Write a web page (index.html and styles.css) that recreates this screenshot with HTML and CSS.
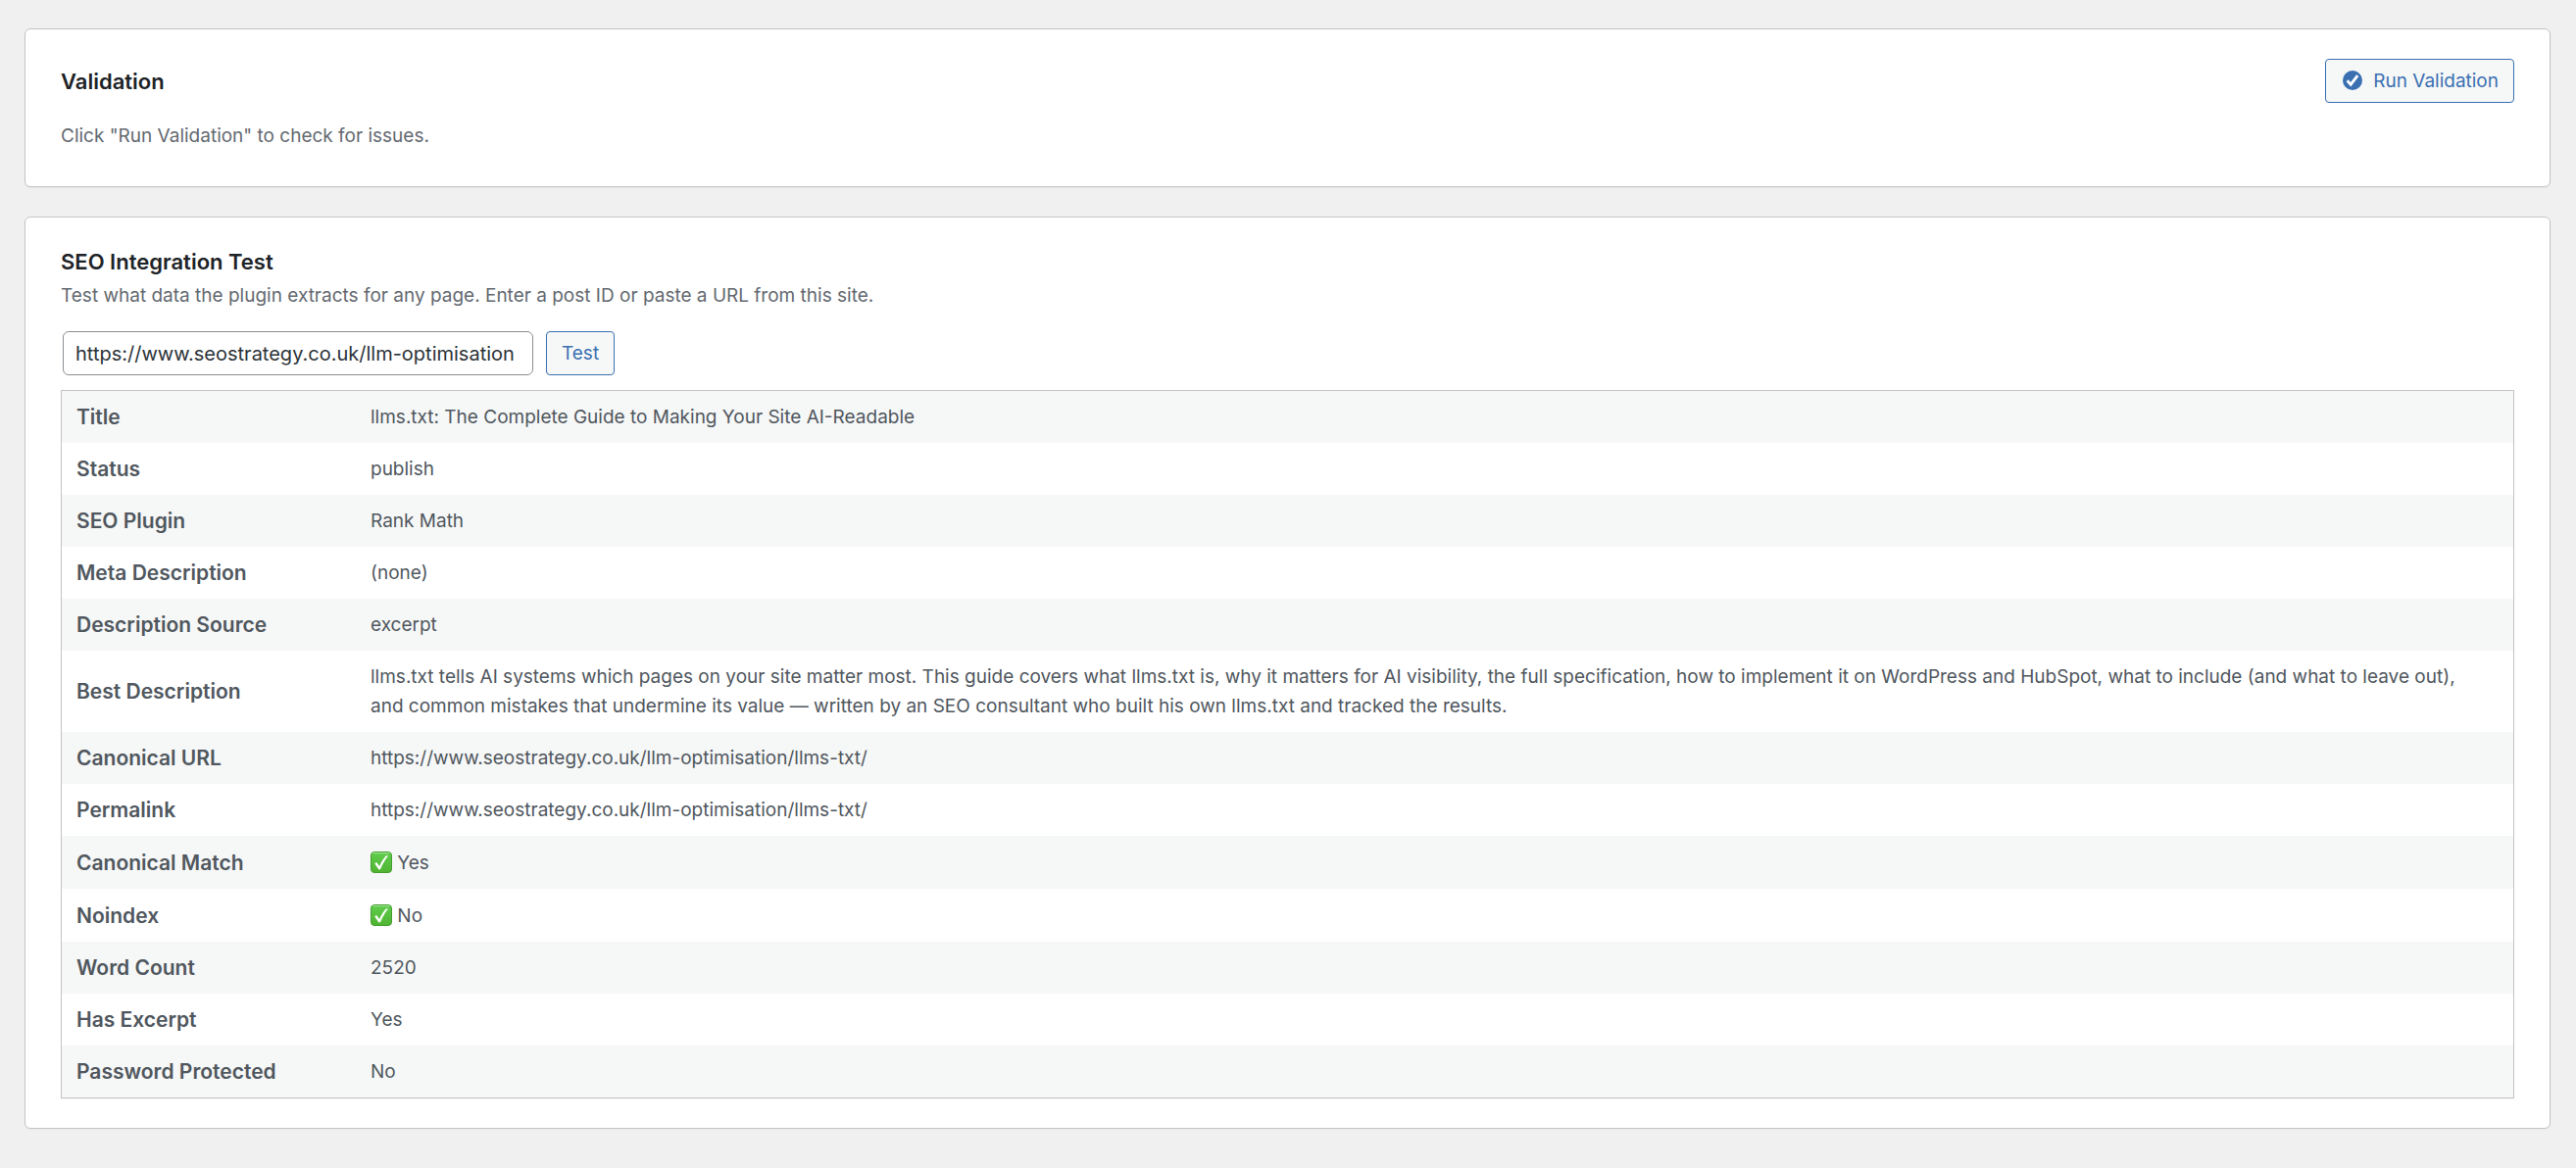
FILE: index.html
```
<!DOCTYPE html>
<html lang="en">
<head>
    <meta charset="UTF-8">
    <title>Validation</title>
    <link rel="stylesheet" href="styles.css">
</head>
<body>
    <svg class="sprite" aria-hidden="true">
        <defs>
            <linearGradient id="green" x1="0" y1="0" x2="0" y2="1">
                <stop offset="0" stop-color="#5fce4c"/>
                <stop offset="1" stop-color="#50b332"/>
            </linearGradient>
        </defs>
        <symbol id="check" viewBox="0 0 22 22">
            <rect x="0.5" y="0.5" width="21" height="21" rx="3.5" fill="url(#green)" stroke="#449c2f"/>
            <path d="M3 1.6h16" stroke="#a5e89a" stroke-width="1" stroke-linecap="round"/>
            <path d="M4.2 12.2l2-1.1 3 3.9C11 10.5 13.2 7 16 4.2l2 .3C14.8 8.5 12.1 13 10 18.2l-1.5.2z" fill="#fff"/>
        </symbol>
    </svg>

    <div class="card">
        <div class="card-header">
            <h2>Validation</h2>
            <button type="button" class="button">
                <svg class="icon" viewBox="0 0 20 20" aria-hidden="true">
                    <circle cx="10" cy="10" r="10" fill="currentColor"/>
                    <path d="M4.6 10.2l3.6 4L15.2 5.2" fill="none" stroke="#fff" stroke-width="2.8"/>
                </svg>
                Run Validation
            </button>
        </div>
        <p class="description">Click "Run Validation" to check for issues.</p>
    </div>

    <div class="card">
        <h2>SEO Integration Test</h2>
        <p class="description">Test what data the plugin extracts for any page. Enter a post ID or paste a URL from this site.</p>

        <form class="test-form">
            <input type="text" id="test-url" aria-label="Post ID or URL" value="https://www.seostrategy.co.uk/llm-optimisation">
            <button type="button" class="button">Test</button>
        </form>

        <table class="results">
            <tbody>
                <tr>
                    <th scope="row">Title</th>
                    <td>llms.txt: The Complete Guide to Making Your Site AI-Readable</td>
                </tr>
                <tr>
                    <th scope="row">Status</th>
                    <td>publish</td>
                </tr>
                <tr>
                    <th scope="row">SEO Plugin</th>
                    <td>Rank Math</td>
                </tr>
                <tr>
                    <th scope="row">Meta Description</th>
                    <td>(none)</td>
                </tr>
                <tr>
                    <th scope="row">Description Source</th>
                    <td>excerpt</td>
                </tr>
                <tr>
                    <th scope="row">Best Description</th>
                    <td>llms.txt tells AI systems which pages on your site matter most. This guide covers what llms.txt is, why it matters for AI visibility, the full specification, how to implement it on WordPress and HubSpot, what to include (and what to leave out), and common mistakes that undermine its value — written by an SEO consultant who built his own llms.txt and tracked the results.</td>
                </tr>
                <tr>
                    <th scope="row">Canonical URL</th>
                    <td>https://www.seostrategy.co.uk/llm-optimisation/llms-txt/</td>
                </tr>
                <tr>
                    <th scope="row">Permalink</th>
                    <td>https://www.seostrategy.co.uk/llm-optimisation/llms-txt/</td>
                </tr>
                <tr>
                    <th scope="row">Canonical Match</th>
                    <td><svg class="emoji" aria-hidden="true"><use href="#check"/></svg> Yes</td>
                </tr>
                <tr>
                    <th scope="row">Noindex</th>
                    <td><svg class="emoji" aria-hidden="true"><use href="#check"/></svg> No</td>
                </tr>
                <tr>
                    <th scope="row">Word Count</th>
                    <td>2520</td>
                </tr>
                <tr>
                    <th scope="row">Has Excerpt</th>
                    <td>Yes</td>
                </tr>
                <tr>
                    <th scope="row">Password Protected</th>
                    <td>No</td>
                </tr>
            </tbody>
        </table>
    </div>
</body>
</html>
```
FILE: styles.css
```
* {
    box-sizing: border-box;
}
body {
    margin: 0;
    padding: 29px 26px 0 25px;
    background: #f0f0f0;
    color: #50575e;
    font-family: Inter, "Liberation Sans", sans-serif;
    font-size: 19px;
    line-height: 30px;
}
.sprite {
    position: absolute;
    width: 0;
    height: 0;
}
.card {
    margin-bottom: 30px;
    padding: 30px 36px;
    background: #fff;
    border: 1px solid #c3c4c7;
    border-radius: 6px;
    box-shadow: 0 1px 2px rgba(0, 0, 0, 0.04);
}
.card-header {
    display: flex;
    justify-content: space-between;
    align-items: center;
    margin-bottom: 14px;
}
h2 {
    margin: 0;
    color: #1d2327;
    font-size: 22px;
    font-weight: 600;
    line-height: 30px;
}
.description {
    margin: 0;
    padding: 5px 0 6px;
    color: #646970;
}
.button {
    display: inline-flex;
    align-items: center;
    gap: 11px;
    height: 45px;
    padding: 0 15px;
    background: #f6f7f7;
    border: 1px solid #3a70b2;
    border-radius: 4px;
    color: #3a70b2;
    font: inherit;
    cursor: pointer;
}
.icon {
    width: 20px;
    height: 20px;
    margin: 0 0 2px 2px;
}
.test-form {
    display: flex;
    gap: 13px;
    margin: 15px 0 15px 2px;
}
.test-form input {
    width: 480px;
    height: 45px;
    padding: 0 12px;
    background: #fff;
    border: 1px solid #8c8f94;
    border-radius: 6px;
    color: #2c3338;
    font: inherit;
    font-size: 20px;
}
.results {
    width: 100%;
    border: 1px solid #c3c4c7;
    border-spacing: 0;
    box-shadow: 0 1px 1px rgba(0, 0, 0, 0.04);
}
.results tr:nth-child(odd) {
    background: #f6f7f7;
}
th, td {
    padding: 12px 24px 11px 15px;
    text-align: left;
    vertical-align: middle;
}
th {
    width: 300px;
    font-size: 21px;
    font-weight: 600;
}
.emoji {
    width: 22px;
    height: 22px;
    margin: 4px 0 5px;
    vertical-align: -9px;
}
```
